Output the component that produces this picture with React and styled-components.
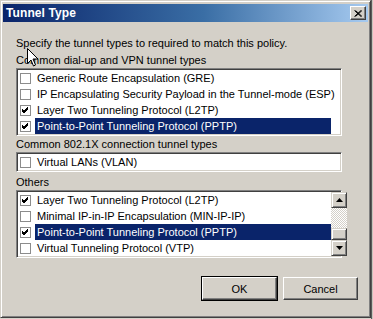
import React from 'react'
import styled, { createGlobalStyle } from 'styled-components'

const GlobalStyle = createGlobalStyle`
  html, body {
    margin: 0;
    padding: 0;
    background: #d4d0c8;
  }
  body {
    font-family: Tahoma, "Liberation Sans", Arial, sans-serif;
    font-size: 11px;
    color: #000;
  }
`

const Screen = styled.div`
  width: 373px;
  height: 319px;
  display: flex;
  background: #d8d4cc;
  position: relative;
  overflow: hidden;
`

const Window = styled.div`
  width: 371px;
  height: 318px;
  box-sizing: border-box;
  background: #d4d0c8;
  border-top: 1px solid #d4d0c8;
  border-left: 1px solid #d4d0c8;
  border-right: 1px solid #404040;
  border-bottom: 1px solid #404040;
  box-shadow: inset 1px 1px 0 #fff, inset -1px -1px 0 #808080;
  padding: 2px;
  display: flex;
  flex-direction: column;
`

const Edge = styled.div`
  width: 2px;
  height: 319px;
  border-left: 1px solid #5a5a5a;
  background: #c8c4bc;
`

const TitleBar = styled.div`
  height: 18px;
  margin-top: 1px;
  display: flex;
  align-items: center;
  justify-content: space-between;
  padding: 0 2px 0 3px;
  background: linear-gradient(to right, #0a246a, #3a6ea5 55%, #a6caf0);
`

const Title = styled.span`
  color: #fff;
  font-weight: bold;
  font-size: 12px;
  letter-spacing: 0.1px;
`

const CloseButton = styled.div`
  width: 16px;
  height: 14px;
  box-sizing: border-box;
  background: #d4d0c8;
  border-top: 1px solid #fff;
  border-left: 1px solid #fff;
  border-right: 1px solid #404040;
  border-bottom: 1px solid #404040;
  box-shadow: inset -1px -1px 0 #808080;
  display: flex;
  align-items: center;
  justify-content: center;
`

const Body = styled.div`
  display: flex;
  flex-direction: column;
  padding: 14px 26px 0 13px;
`

const Intro = styled.div`
  line-height: 14px;
  margin-bottom: 3px;
`

const GroupLabel = styled.div`
  line-height: 14px;
  margin-bottom: 1px;
`

const ListBox = styled.div`
  box-sizing: border-box;
  background: #fff;
  border-top: 1px solid #808080;
  border-left: 1px solid #808080;
  border-right: 1px solid #fff;
  border-bottom: 1px solid #fff;
  box-shadow: inset 1px 1px 0 #404040, inset -1px -1px 0 #d4d0c8;
  padding: 1px;
  display: flex;
  margin-bottom: ${p => p.gap}px;
`

const Rows = styled.div`
  flex: 1;
  display: flex;
  flex-direction: column;
`

const Row = styled.div`
  height: 16px;
  display: flex;
  align-items: center;
  gap: 4px;
  white-space: nowrap;
`

const Box = styled.span`
  width: 11px;
  height: 11px;
  box-sizing: border-box;
  border: 1px solid #8c8c8c;
  background: #fff;
  display: flex;
  align-items: center;
  justify-content: center;
  flex: none;
  margin-left: 2px;
`

const Label = styled.span`
  width: 296px;
  line-height: 16px;
  padding-left: 2px;
  box-sizing: border-box;
  background: ${p => (p.selected ? '#0a246a' : 'transparent')};
  color: ${p => (p.selected ? '#fff' : '#000')};
`

const ScrollBar = styled.div`
  width: 16px;
  display: flex;
  flex-direction: column;
  flex: none;
`

const Track = styled.div`
  flex: 1;
  background-color: #fff;
  background-image: conic-gradient(#d4d0c8 25%, #fff 0 50%, #d4d0c8 0 75%, #fff 0);
  background-size: 2px 2px;
`

const ScrollButton = styled.div`
  height: ${p => p.h}px;
  box-sizing: border-box;
  background: #d4d0c8;
  border-top: 1px solid #d4d0c8;
  border-left: 1px solid #d4d0c8;
  border-right: 1px solid #404040;
  border-bottom: 1px solid #404040;
  box-shadow: inset 1px 1px 0 #fff, inset -1px -1px 0 #808080;
  display: flex;
  align-items: center;
  justify-content: center;
`

const Footer = styled.div`
  display: flex;
  justify-content: flex-end;
  gap: 6px;
  padding: 19px 10px 0 0;
`

const Button = styled.div`
  width: 75px;
  height: 23px;
  box-sizing: border-box;
  background: #d4d0c8;
  border-top: 1px solid #fff;
  border-left: 1px solid #fff;
  border-right: 1px solid #404040;
  border-bottom: 1px solid #404040;
  box-shadow: inset -1px -1px 0 #808080;
  outline: ${p => (p.primary ? '1px solid #000' : 'none')};
  display: flex;
  align-items: center;
  justify-content: center;
`

const Cursor = styled.svg`
  position: absolute;
  left: 27px;
  top: 48px;
`

const Check = () => (
  <svg width="9" height="9" viewBox="0 0 9 9">
    <path d="M1 4 L3 6 L7 2 M1 5 L3 7 L7 3 M1 3 L3 5 L7 1" stroke="#000" strokeWidth="1" fill="none" />
  </svg>
)

const Arrow = ({ down }) => (
  <svg width="7" height="4" viewBox="0 0 7 4">
    <path d={down ? 'M0 0 H7 L3.5 4 Z' : 'M0 4 H7 L3.5 0 Z'} fill="#000" />
  </svg>
)

const Item = ({ checked, selected, children }) => (
  <Row>
    <Box>{checked && <Check />}</Box>
    <Label selected={selected}>{children}</Label>
  </Row>
)

const dialup = [
  { text: 'Generic Route Encapsulation (GRE)' },
  { text: 'IP Encapsulating Security Payload in the Tunnel-mode (ESP)' },
  { text: 'Layer Two Tunneling Protocol (L2TP)', checked: true },
  { text: 'Point-to-Point Tunneling Protocol (PPTP)', checked: true, selected: true },
]

const others = [
  { text: 'Layer Two Tunneling Protocol (L2TP)', checked: true },
  { text: 'Minimal IP-in-IP Encapsulation (MIN-IP-IP)' },
  { text: 'Point-to-Point Tunneling Protocol (PPTP)', checked: true, selected: true },
  { text: 'Virtual Tunneling Protocol (VTP)' },
]

export default function App() {
  return (
    <Screen>
      <GlobalStyle />
      <Window>
        <TitleBar>
          <Title>Tunnel Type</Title>
          <CloseButton>
            <svg width="8" height="7" viewBox="0 0 8 7">
              <path d="M0.5 0.5 L7 6.5 M1.5 0.5 L8 6.5 M7 0.5 L0.5 6.5 M8 0.5 L1.5 6.5" stroke="#000" strokeWidth="1" />
            </svg>
          </CloseButton>
        </TitleBar>
        <Body>
          <Intro>Specify the tunnel types to required to match this policy.</Intro>
          <GroupLabel>Common dial-up and VPN tunnel types</GroupLabel>
          <ListBox gap={1}>
            <Rows>
              {dialup.map(r => (
                <Item key={r.text} checked={r.checked} selected={r.selected}>{r.text}</Item>
              ))}
            </Rows>
          </ListBox>
          <GroupLabel>Common 802.1X connection tunnel types</GroupLabel>
          <ListBox gap={3}>
            <Rows>
              <Item>Virtual LANs (VLAN)</Item>
            </Rows>
          </ListBox>
          <GroupLabel>Others</GroupLabel>
          <ListBox gap={0}>
            <Rows>
              {others.map(r => (
                <Item key={r.text} checked={r.checked} selected={r.selected}>{r.text}</Item>
              ))}
            </Rows>
            <ScrollBar>
              <ScrollButton h={16}><Arrow /></ScrollButton>
              <Track />
              <ScrollButton h={12} />
              <ScrollButton h={16}><Arrow down /></ScrollButton>
            </ScrollBar>
          </ListBox>
        </Body>
        <Footer>
          <Button primary>OK</Button>
          <Button>Cancel</Button>
        </Footer>
      </Window>
      <Edge />
      <Cursor width="12" height="19" viewBox="0 0 12 19">
        <path d="M0.5 0.5 V15.5 L4 12 L6.5 18 L8.5 17 L6 11 H11 Z" fill="#fff" stroke="#000" strokeWidth="1" />
      </Cursor>
    </Screen>
  )
}
